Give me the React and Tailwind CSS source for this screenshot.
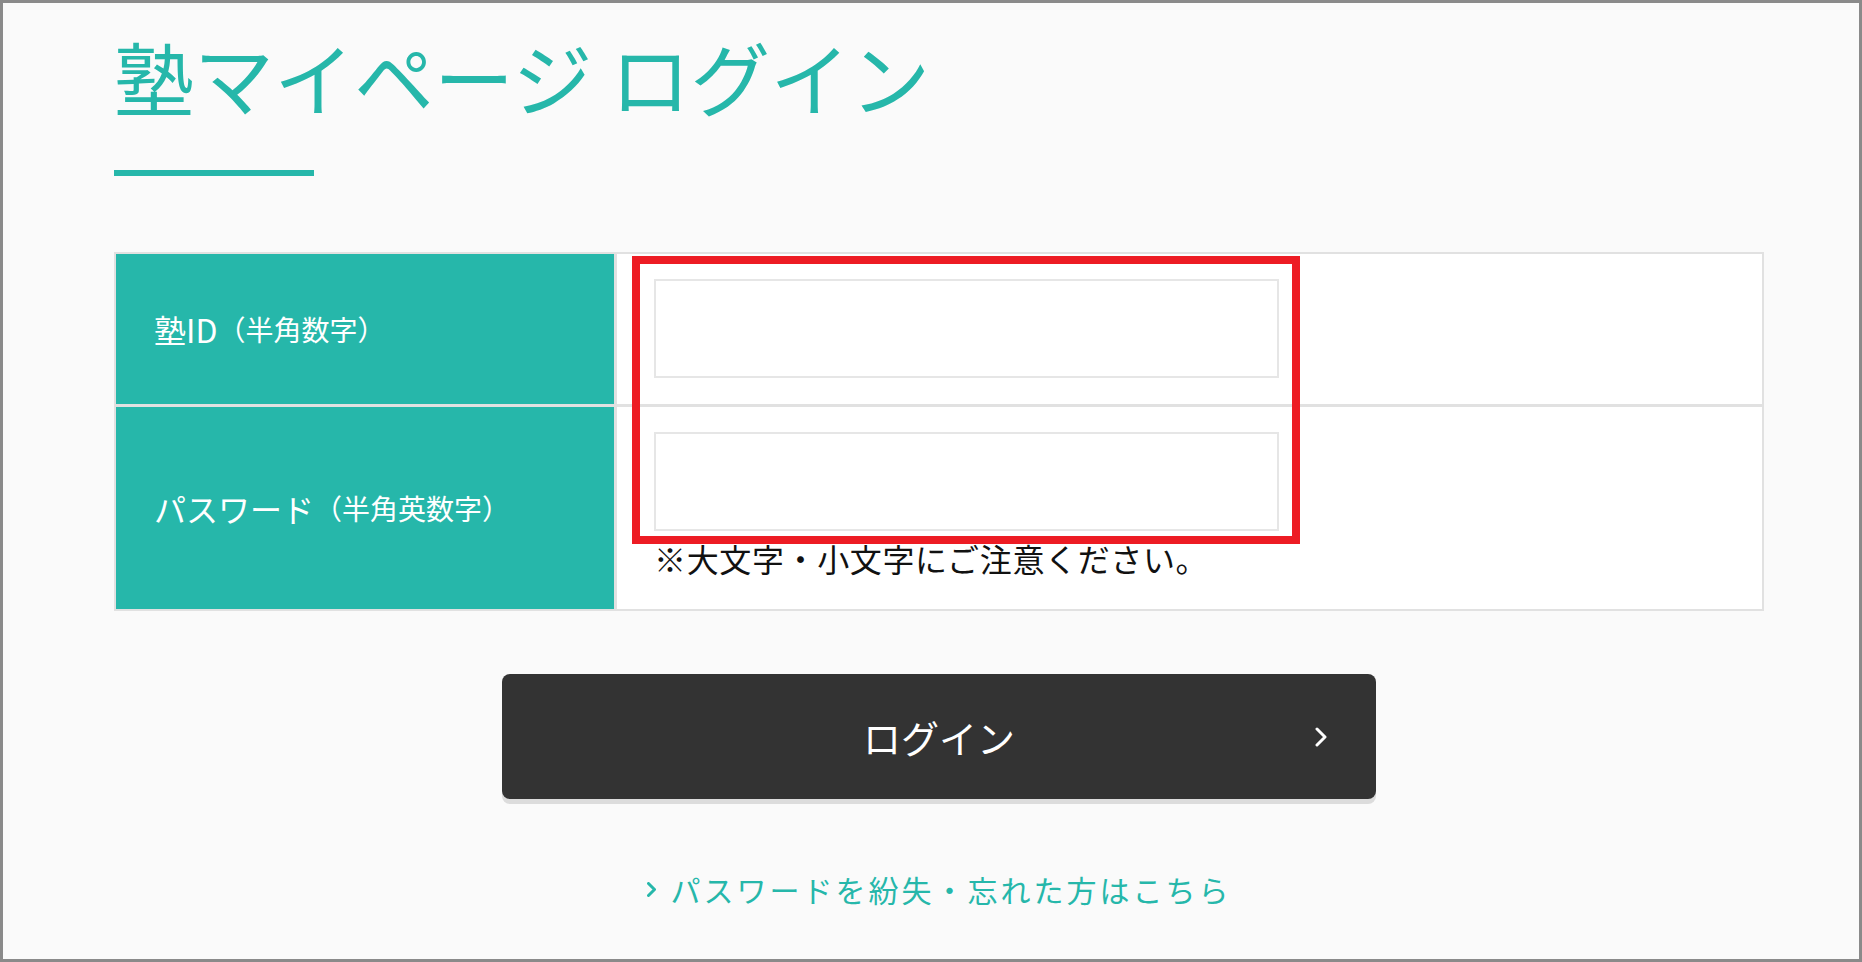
import React from 'react';

const teal = 'text-[#26b7aa]';

const ChevronIcon = ({ className, strokeWidth = 3 }) => (
    <svg viewBox="0 0 12 20" className={className} fill="none" stroke="currentColor" strokeWidth={strokeWidth} strokeLinecap="round" strokeLinejoin="round">
        <polyline points="2,2 10,10 2,18" />
    </svg>
);

const App = () => {
    return (
        <div className="w-[1862px] h-[962px] overflow-hidden border-[3px] border-[#8a8a8a] bg-[#fafafa] font-['Noto_Sans_CJK_JP',sans-serif]">
            <div className="ml-[111px] w-[1650px] pt-[12px]">
                <h1 className={`text-[80px] leading-[120px] font-normal ${teal}`}>
                    塾マイページ ログイン
                </h1>
                <div className="mt-[35px] h-[6px] w-[200px] bg-[#26b7aa]" />

                {/* フォーム */}
                <div className="relative mt-[76px] border-2 border-[#e1e1e1] bg-white">
                    <div className="flex h-[153px] border-b-[3px] border-[#e1e1e1]">
                        <div className="flex w-[501px] items-center border-r-[3px] border-[#e1e1e1] bg-[#26b7aa] pl-[38px] text-white">
                            <span className="text-[32px]">塾ID</span>
                            <span className="text-[28px]">（半角数字）</span>
                        </div>
                        <div className="flex-1 px-[37px] pt-[25px]">
                            <input type="text" className="block h-[99px] w-[625px] border-2 border-[#e6e6e6] bg-white outline-none" />
                        </div>
                    </div>
                    <div className="flex h-[202px]">
                        <div className="flex w-[501px] items-center border-r-[3px] border-[#e1e1e1] bg-[#26b7aa] pl-[38px] text-white">
                            <span className="text-[32px]">パスワード</span>
                            <span className="text-[28px]">（半角英数字）</span>
                        </div>
                        <div className="flex-1 px-[37px] pt-[25px]">
                            <input type="password" className="block h-[99px] w-[625px] border-2 border-[#e6e6e6] bg-white outline-none" />
                            <p className="mt-[3px] text-[32px] leading-[48px] tracking-[0.02em] text-[#111]">
                                ※大文字・小文字にご注意ください。
                            </p>
                        </div>
                    </div>

                    {/* 注釈の赤枠 */}
                    <div className="pointer-events-none absolute left-[516px] top-[2px] h-[288px] w-[668px] border-[8px] border-[#ed1c24]" />
                </div>

                <button className="relative mx-auto mt-[63px] flex h-[125px] w-[874px] items-center justify-center rounded-[8px] bg-[#333333] text-[38px] text-white shadow-[0_5px_0_#dcdcdc]">
                    ログイン
                    <ChevronIcon className="absolute right-[49px] top-1/2 h-[20px] w-[12px] -translate-y-1/2" />
                </button>

                <div className="mt-[68px] flex justify-center">
                    <a href="#" className={`flex items-center gap-[15px] text-[30px] leading-[45px] tracking-[0.1em] ${teal}`}>
                        <ChevronIcon className="h-[15px] w-[9px]" strokeWidth={4} />
                        パスワードを紛失・忘れた方はこちら
                    </a>
                </div>
            </div>
        </div>
    );
};

export default App;
